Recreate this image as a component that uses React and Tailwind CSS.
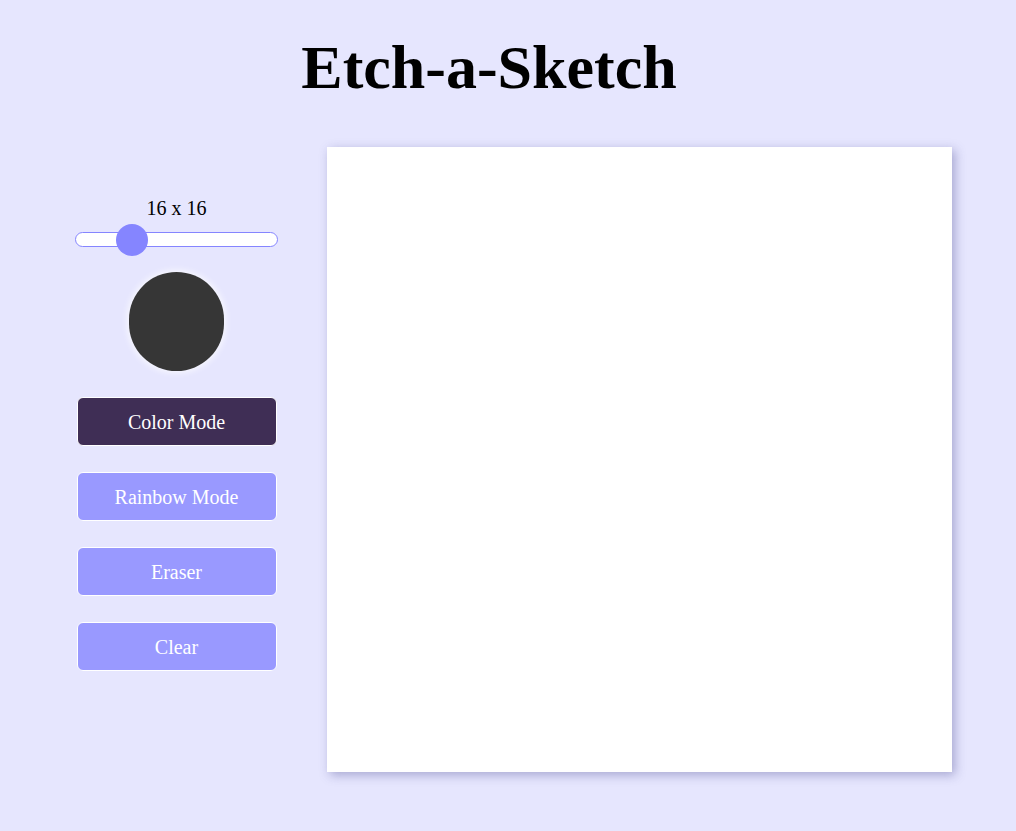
import { useState } from "react";

const MODES = ["Color Mode", "Rainbow Mode", "Eraser", "Clear"];

export default function App() {
  const [size] = useState(16);
  const [mode, setMode] = useState("Color Mode");
  const pct = (size - 1) / 63;

  return (
    <div className="min-h-[831px] bg-[#e6e6fe] font-['Liberation_Serif',serif] text-black">
      <h1 className="pt-[33px] pr-[38px] text-center text-[62px] font-bold leading-[68px]">Etch-a-Sketch</h1>

      <div className="mt-[46px] flex items-start pl-[75px]">
        <div className="flex w-[203px] flex-col items-center pt-[46px]">
          <div className="text-[20px] leading-[30px]">{size} x {size}</div>
          <div className="relative mt-[9px] h-[15px] w-[203px] rounded-full border border-[#8585ff] bg-white">
            <div
              className="absolute top-1/2 h-[32px] w-[32px] -translate-y-1/2 rounded-full bg-[#8585ff]"
              style={{ left: `${pct * 171 - 1}px` }}
            />
          </div>
          <div className="mt-[25px] h-[99px] w-[95px] rounded-full bg-[#363636] shadow-[0_0_6px_2px_rgba(255,255,255,0.7)]" />
          <div className="mt-[26px] flex flex-col gap-[26px]">
            {MODES.map(m => (
              <button
                key={m}
                onClick={() => setMode(m)}
                className={`flex h-[49px] w-[200px] items-center justify-center rounded-[6px] border border-white text-[20px] text-white ${mode === m ? "bg-[#3f2e55]" : "bg-[#9999ff]"}`}
              >
                {m}
              </button>
            ))}
          </div>
        </div>

        <div className="ml-[49px] h-[625px] w-[625px] bg-white shadow-[3px_3px_10px_rgba(70,70,140,0.4)]" />
      </div>
    </div>
  );
}
